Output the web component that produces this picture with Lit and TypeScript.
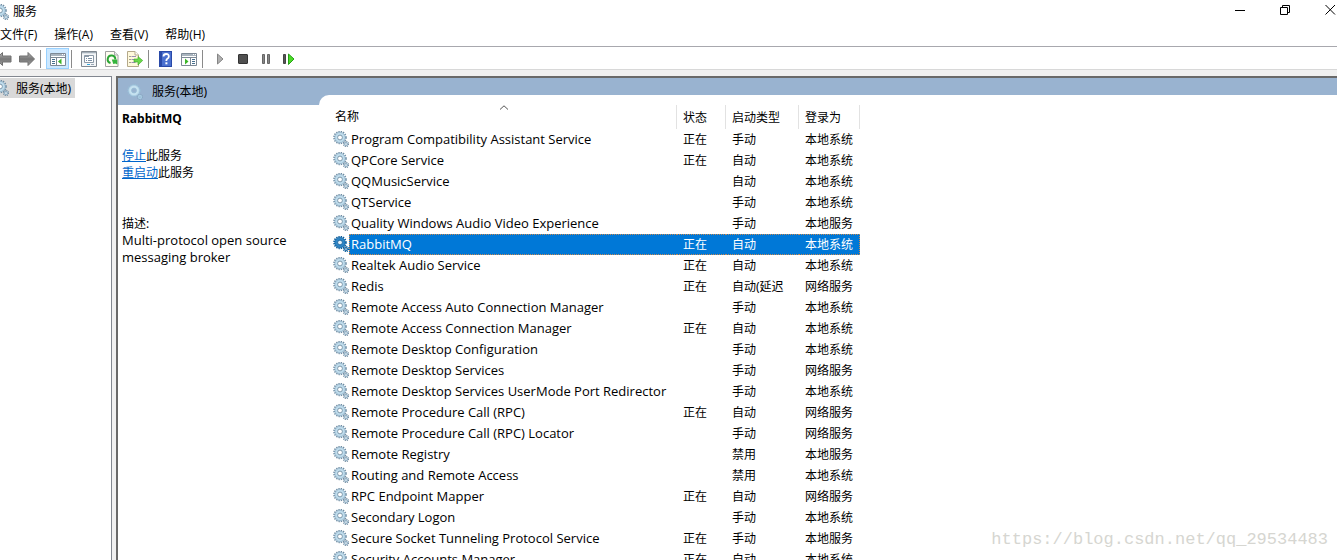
import { LitElement, html, css, svg, nothing } from "lit";
import { customElement, state } from "lit/decorators.js";
import { classMap } from "lit/directives/class-map.js";

type Row = [name: string, running: boolean, start: string, account: string];

const SYS = "本地系统";
const LOCAL = "本地服务";
const NET = "网络服务";

const ROWS: Row[] = [
  ["Program Compatibility Assistant Service", true, "手动", SYS],
  ["QPCore Service", true, "自动", SYS],
  ["QQMusicService", false, "自动", SYS],
  ["QTService", false, "手动", SYS],
  ["Quality Windows Audio Video Experience", false, "手动", LOCAL],
  ["RabbitMQ", true, "自动", SYS],
  ["Realtek Audio Service", true, "自动", SYS],
  ["Redis", true, "自动(延迟", NET],
  ["Remote Access Auto Connection Manager", false, "手动", SYS],
  ["Remote Access Connection Manager", true, "自动", SYS],
  ["Remote Desktop Configuration", false, "手动", SYS],
  ["Remote Desktop Services", false, "手动", NET],
  ["Remote Desktop Services UserMode Port Redirector", false, "手动", SYS],
  ["Remote Procedure Call (RPC)", true, "自动", NET],
  ["Remote Procedure Call (RPC) Locator", false, "手动", NET],
  ["Remote Registry", false, "禁用", LOCAL],
  ["Routing and Remote Access", false, "禁用", SYS],
  ["RPC Endpoint Mapper", true, "自动", NET],
  ["Secondary Logon", false, "手动", SYS],
  ["Secure Socket Tunneling Protocol Service", true, "手动", LOCAL],
  ["Security Accounts Manager", true, "自动", SYS],
];

interface GearTone { teeth: string; body: string; rim: string; hole: string; small: string }
const NORMAL: GearTone = { teeth: "#6f8da3", body: "#bfdcec", rim: "#86a9c1", hole: "#fff", small: "#7891a5" };
const DARK: GearTone = { teeth: "#0b5a97", body: "#2f86c6", rim: "#0f62a2", hole: "#e6f2fa", small: "#0b5a97" };
const FAINT: GearTone = { teeth: "#98bdd6", body: "#c6e2f0", rim: "#a9cfe4", hole: "#99b3d0", small: "#8aa9c2" };

/* A large gear with a small one at its lower right. */
const gearShapes = (t: GearTone) => svg`
  <circle cx="7" cy="6.500" r="5.900" fill="none" stroke=${t.teeth} stroke-width="1.700" stroke-dasharray="1.300 1.017"/>
  <circle cx="7" cy="6.500" r="3.900" fill=${t.hole} stroke=${t.body} stroke-width="2.800"/>
  <circle cx="7" cy="6.500" r="5.200" fill="none" stroke=${t.rim} stroke-width=".7"/>
  <circle cx="7" cy="6.500" r="2.400" fill="none" stroke=${t.teeth} stroke-width=".9"/>
  <circle cx="13" cy="13" r="2.500" fill="none" stroke=${t.small} stroke-width="1.400" stroke-dasharray="1.100 .86"/>
  <circle cx="13" cy="13" r="1.400" fill=${t.hole} stroke=${t.rim} stroke-width="1.100"/>`;

const gear = (tone = NORMAL) =>
  html`<svg class="icon" viewBox="0 0 16 16" aria-hidden="true">${gearShapes(tone)}</svg>`;
const halfGear = () =>
  html`<svg class="half" viewBox="7 0 9 16" aria-hidden="true">${gearShapes(NORMAL)}</svg>`;

const grad = svg`<defs><linearGradient id="g" x1="0" y1="0" x2="0" y2="1">
  <stop offset="0" stop-color="#b4b4b4"/><stop offset=".5" stop-color="#777"/><stop offset="1" stop-color="#a0a0a0"/>
</linearGradient></defs>`;

const ICONS = {
  back: html`<svg class="arrow" viewBox="5 0 12 16">${grad}<path d="M.8 8 7.500 1.500V5H16v6H7.500v3.500z" fill="url(#g)" stroke="#707070"/></svg>`,
  forward: html`<svg class="wide" viewBox="0 0 18 16">${grad}<path d="M16.500 8 10 1.500V5H1.500v6H10v3.500z" fill="url(#g)" stroke="#707070"/></svg>`,
  tree: html`<svg class="wide" viewBox="0 0 18 16"><path d="M1.500 2.500h15v12h-15z" fill="#fff" stroke="#7d8995"/><path d="M2 3h14v2H2z" fill="#a9b4be"/><path d="M13 3.500h1m1 0h1" stroke="#fff"/><path d="M2 6.500h14M7.500 7v7" stroke="#7d8995"/><path d="M3 8.500h3m-3 2h3m-3 2h3" stroke="#47708f"/><path d="M12.500 7.500v6L9 10.500z" fill="#3bb527"/></svg>`,
  props: html`<svg class="icon" viewBox="0 0 16 16"><path d="M.5.5h15v15H.5z" fill="#f4f6f8" stroke="#808890"/><path d="M1 1.500h14" stroke="#a4afb9"/><path d="M1 2.500h14" stroke="#dbe1e6"/><path d="M3.500 4.500h9v7h-9z" fill="#fff" stroke="#8b99a7"/><path d="M4 5.500h4" stroke="#8b99a7"/><path d="M5 7.500h1m1 0h4M5 9.500h1m1 0h4" stroke="#7b90a5"/><path d="M6 13.500h3" stroke="#36a5da"/><path d="M10 13.500h3" stroke="#9aa8b5"/></svg>`,
  refresh: html`<svg class="icon" viewBox="0 0 16 16"><path d="M1.500.5h9L14 4v11.500H1.500z" fill="#fffdf2" stroke="#a0a0a0"/><path d="M10.500.5V4H14" fill="#eee" stroke="#aaa"/><path d="M6.500 12A3.800 3.800 0 1 1 11.300 8.500" fill="none" stroke="#2ba534" stroke-width="2"/><path d="M7.800 8.500h5.500v5l-2-1-2 .5z" fill="#35b53d"/></svg>`,
  exportList: html`<svg class="icon" viewBox="0 0 16 16"><path d="M.5.5H8L11.500 4v11.500H.5z" fill="#fff9dc" stroke="#b5a98a"/><path d="M8 .5V4h3.500" fill="#fff" stroke="#b5a98a"/><path d="M2.500 5.500h1m-1 3h1m-1 3h1" stroke="#444"/><path d="M4.500 5.500H9m-4.500 3h4m-4 3h4" stroke="#9a8fb5"/><path d="M7 8h4V5.500l4.700 4L11 14v-3H7z" fill="#6ad84a" stroke="#3aa622" stroke-width=".6"/></svg>`,
  help: html`<svg class="help" viewBox="0 0 13 16"><path d="M0 0h13v16H0z" fill="#2949a8"/><path d="M3 1h9v14H3z" fill="#4a70cf"/><path d="M4.500 5.500Q4.500 3 7.200 3t2.600 2.400Q9.800 7 8.300 7.800 7.300 8.400 7.300 10" fill="none" stroke="#fff" stroke-width="1.800"/><path d="M6.400 11.300h2v2h-2z" fill="#fff"/></svg>`,
  pane: html`<svg class="wide" viewBox="0 0 18 16"><path d="M1.500 2.500h15v12h-15z" fill="#fff" stroke="#7d8995"/><path d="M2 3h14v2H2z" fill="#a9b4be"/><path d="M13 3.500h1m1 0h1" stroke="#fff"/><path d="M2 6.500h14M10.500 7v7" stroke="#7d8995"/><path d="M12 8.500h3m-3 2h3m-3 2h3" stroke="#47708f"/><path d="M5 7.500v6l3.500-3z" fill="#3bb527"/></svg>`,
  play: html`<svg class="icon" viewBox="0 0 16 16"><path d="M5.500 3v10L11 8z" fill="#b0b0b0" stroke="#858585"/></svg>`,
  stop: html`<svg class="icon" viewBox="0 0 16 16"><rect x="3.500" y="3.500" width="9" height="9" rx=".5" fill="#505050" stroke="#333"/></svg>`,
  pause: html`<svg class="icon" viewBox="0 0 16 16"><path d="M4.500 3.500h2v9h-2zm5 0h2v9h-2z" fill="#888" stroke="#666"/></svg>`,
  restart: html`<svg class="icon" viewBox="0 0 16 16"><path d="M2.500 3.500h2v9h-2z" fill="#555" stroke="#444"/><path d="M7.500 3v10.500L13 8z" fill="#4cdb28" stroke="#25a315"/></svg>`,
};

@customElement("app-root")
export class AppRoot extends LitElement {
  @state() private selected = "RabbitMQ";

  static styles = css`
    :host {
      display: flex;
      flex-direction: column;
      height: 100vh;
      overflow: hidden;
      position: relative;
      background: #fff;
      color: #000;
      font: 12px/17px "Noto Sans", "Noto Sans CJK SC", sans-serif;
    }
    * { box-sizing: border-box; }
    button { font: inherit; color: inherit; border: 0; padding: 0; background: none; }
    svg { display: block; flex: none; }
    .icon { width: 16px; height: 16px; }
    .half { width: 9px; height: 16px; }
    .arrow { width: 12px; height: 16px; }
    .wide { width: 18px; height: 16px; }
    .help { width: 13px; height: 16px; }
    .title { display: flex; align-items: center; justify-content: space-between; height: 23px; flex: none; }
    .caption { display: flex; align-items: center; gap: 4px; }
    h1 { font: inherit; margin: 0; }
    .window { display: flex; gap: 33px; align-self: start; padding: 4px 1px 0 0; }
    .window svg { width: 12px; height: 12px; fill: none; stroke: #000; }
    .menu { display: flex; gap: 17px; height: 23px; align-items: center; flex: none; font-family: "Open Sans", "Noto Sans CJK SC", sans-serif; }
    .tools {
      display: flex;
      align-items: end;
      flex: none;
      height: 24px;
      border-top: 1px solid #a8a8ae;
      border-bottom: 1px solid #d8d8d8;
    }
    .tools button { display: grid; place-items: center; height: 20px; width: 23px; }
    .tools .first { width: 15px; justify-items: start; }
    .tools .on { height: 21px; background: #cce8ff; border: 1px solid #99d1ff; }
    .rule { width: 1px; height: 18px; background: #8a8a8a; margin: 0 5px 1px 2px; }
    .body { display: flex; flex: 1; min-height: 0; gap: 4px; padding-top: 6px; background: #f0f0f0; }
    .tree { flex: none; width: 112px; background: #fff; border: solid #828790; border-width: 1px 1px 0 0; padding-top: 1px; }
    .node { display: inline-flex; align-items: center; gap: 7px; height: 20px; padding-right: 4px; background: #d9d9d9; }
    .pane { flex: 1; min-width: 0; border: solid #696969; border-width: 2px 0 0 2px; background: #99b3d0; display: grid; grid-template-columns: 201px 1fr; grid-template-rows: 17px 10px 1fr; }
    .banner { grid-area: 1 / 1 / 3 / 2; display: flex; align-items: center; gap: 9px; padding-left: 9px; }
    h2 { font: inherit; margin: 0; }
    .info { grid-area: 3 / 1; background: #fff; padding: 5px 4px 0; }
    .info h3 { font-size: 12px; line-height: 17px; margin: 0 0 20px; }
    .info p { margin: 0; }
    .info .desc { margin-top: 34px; }
    .info .latin, .label { font-family: "Open Sans", "Noto Sans CJK SC", sans-serif; font-size: 13px; }
    a { color: #0066cc; }
    .list { grid-area: 2 / 2 / 4 / 3; background: #fff; border-top-left-radius: 10px; padding: 10px 0 0 14px; overflow: hidden; }
    table { border-collapse: separate; border-spacing: 0; table-layout: fixed; width: 527px; }
    .c1 { width: 344px; }
    .c2 { width: 49px; }
    .c3 { width: 73px; }
    .c4 { width: 61px; }
    th { height: 24px; padding: 0 0 0 6px; text-align: left; font-weight: 400; border-right: 1px solid #e2e2e2; }
    th:first-child { padding: 0 4px 0 2px; }
    .sort { display: grid; grid-template-columns: 1fr 10px 1fr; height: 24px; line-height: 24px; }
    .sort svg { width: 10px; height: 5px; }
    td { height: 21px; padding: 0 0 0 6px; white-space: nowrap; overflow: hidden; }
    td:first-child { padding: 0; }
    .name { display: flex; }
    .label { flex: 1; height: 21px; line-height: 21px; padding-left: 2px; }
    .name svg { margin-top: 2px; }
    .sel td:not(:first-child), .sel .label { background: #0078d7; color: #fff; border: dotted #c58a55; border-width: 1px 0; }
    .sel .label { border-left-width: 1px; padding-left: 1px; line-height: 19px; }
    .sel td:last-child { border-right-width: 1px; }
    .mark { position: absolute; right: 9px; bottom: 9px; font: 17px/22px "Liberation Mono", monospace; color: #d6d6d1; }
  `;

  render() {
    return html`
      <header class="title">
        <div class="caption">${halfGear()}<h1>服务</h1></div>
        <div class="window">
          <button aria-label="最小化"><svg viewBox="0 0 12 12"><path d="M1 6.500h10"/></svg></button>
          <button aria-label="还原"><svg viewBox="0 0 12 12"><path d="M1.500 3.500h7v7h-7zM3.500 3V1.500h7v7H9"/></svg></button>
          <button aria-label="关闭"><svg viewBox="0 0 12 12"><path d="M1.500 1 11 10.500M11 1 1.500 10.500"/></svg></button>
        </div>
      </header>
      <nav class="menu">
        ${["文件(F)", "操作(A)", "查看(V)", "帮助(H)"].map((m) => html`<button>${m}</button>`)}
      </nav>
      <div class="tools" role="toolbar">
        <button class="first" aria-label="后退">${ICONS.back}</button>
        <button aria-label="前进">${ICONS.forward}</button>
        <span class="rule"></span>
        <button class="on" aria-label="显示/隐藏控制台树">${ICONS.tree}</button>
        <span class="rule"></span>
        <button aria-label="属性">${ICONS.props}</button>
        <button aria-label="刷新">${ICONS.refresh}</button>
        <button aria-label="导出列表">${ICONS.exportList}</button>
        <span class="rule"></span>
        <button aria-label="帮助">${ICONS.help}</button>
        <button aria-label="显示/隐藏操作窗格">${ICONS.pane}</button>
        <span class="rule"></span>
        <button aria-label="启动服务">${ICONS.play}</button>
        <button aria-label="停止服务">${ICONS.stop}</button>
        <button aria-label="暂停服务">${ICONS.pause}</button>
        <button aria-label="重启动服务">${ICONS.restart}</button>
      </div>
      <div class="body">
        <aside class="tree"><button class="node">${halfGear()}服务(本地)</button></aside>
        <main class="pane">
          <div class="banner">${gear(FAINT)}<h2>服务(本地)</h2></div>
          <section class="info">
            <h3>${this.selected}</h3>
            <p><a href="#stop">停止</a>此服务</p>
            <p><a href="#restart">重启动</a>此服务</p>
            <p class="desc">描述:</p>
            <p class="latin">Multi-protocol open source messaging broker</p>
          </section>
          <section class="list">
            <table>
              <colgroup><col class="c1" /><col class="c2" /><col class="c3" /><col class="c4" /></colgroup>
              <thead>
                <tr>
                  <th aria-sort="ascending"><div class="sort">名称<svg viewBox="0 0 10 5"><path d="M1 4.500 5 .800 9 4.500" fill="none" stroke="#555"/></svg></div></th>
                  <th>状态</th><th>启动类型</th><th>登录为</th>
                </tr>
              </thead>
              <tbody>
                ${ROWS.map(([name, running, start, account]) => {
                  const sel = name === this.selected;
                  return html`<tr class=${classMap({ sel })} @click=${() => (this.selected = name)}>
                    <td><div class="name">${gear(sel ? DARK : NORMAL)}<span class="label">${name}</span></div></td>
                    <td>${running ? "正在" : nothing}</td>
                    <td>${start}</td>
                    <td>${account}</td>
                  </tr>`;
                })}
              </tbody>
            </table>
          </section>
        </main>
      </div>
      <div class="mark">https://blog.csdn.net/qq_29534483</div>
    `;
  }
}
